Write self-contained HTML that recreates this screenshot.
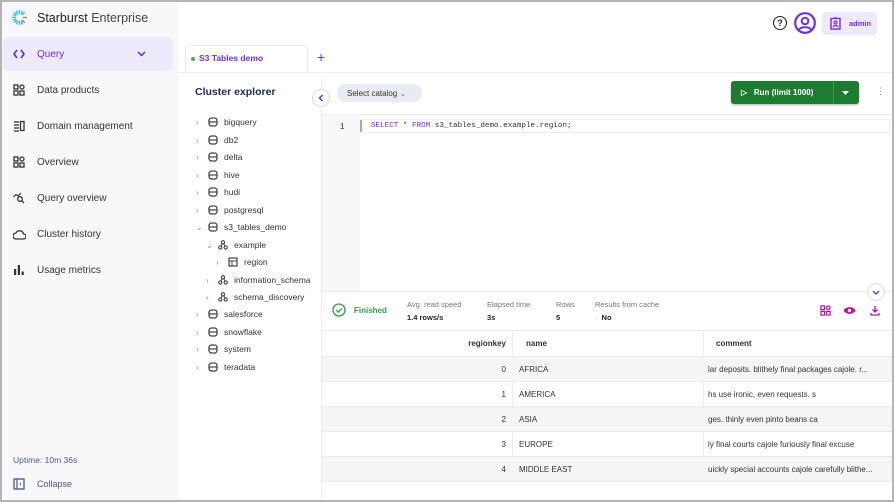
<!DOCTYPE html><html><head><style>
*{box-sizing:border-box;margin:0;padding:0}
body{width:894px;height:502px;overflow:hidden;font-family:"Liberation Sans",sans-serif;background:#fff;position:relative;color:#222}
.frame{position:absolute;inset:0;border:2px solid #b4b4b4;pointer-events:none;z-index:10}
.abs{position:absolute}
.side{left:0;top:0;width:178px;height:502px;background:#f8f8fa}
.nav{position:absolute;left:4px;width:168px;height:34px;display:flex;align-items:center;font-size:10px;color:#333}
.nav svg{margin:0 12px 0 9px}
.tree{font-size:8.5px;color:#333}
.tr{position:absolute;display:flex;align-items:center;height:12px}
.chev{color:#888;font-size:8px;width:12px}
.tr svg{margin-right:6px}
.row{position:absolute;left:322px;width:570px;height:25px;font-size:8px;color:#333;border-bottom:1px solid #ececec}
.row span{position:absolute;top:8px}
.g{background:#f4f5f7}
</style></head><body>
<svg width="0" height="0" style="position:absolute"><defs>
<symbol id="db" viewBox="0 0 10 10"><rect x="1" y="1" width="8" height="8" rx="2.5" fill="none" stroke="#444" stroke-width="1.3"/><line x1="1" y1="5" x2="9" y2="5" stroke="#444" stroke-width="1.2"/></symbol>
<symbol id="sch" viewBox="0 0 10 10"><circle cx="5" cy="2.3" r="1.6" fill="none" stroke="#444" stroke-width="1.1"/><circle cx="2.3" cy="7.5" r="1.6" fill="none" stroke="#444" stroke-width="1.1"/><circle cx="7.7" cy="7.5" r="1.6" fill="none" stroke="#444" stroke-width="1.1"/><path d="M4.3 3.8L3 6M5.7 3.8L7 6" stroke="#444" stroke-width="1"/></symbol>
<symbol id="grid" viewBox="0 0 12 12"><rect x="1" y="1" width="4" height="4" fill="none" stroke="#333" stroke-width="1.3"/><rect x="7" y="1" width="4" height="4" rx="2" fill="none" stroke="#333" stroke-width="1.3"/><rect x="1" y="7" width="4" height="4" fill="none" stroke="#333" stroke-width="1.3"/><rect x="7" y="7" width="4" height="4" fill="none" stroke="#333" stroke-width="1.3"/></symbol>
</defs></svg>
<div class="abs side"></div>
<svg class="abs" style="left:11px;top:9px" width="17" height="17" viewBox="0 0 17 17"><g stroke="#2ec4e6" stroke-width="1.4">
<line x1="8.5" y1="1" x2="8.5" y2="5"/><line x1="8.5" y1="12" x2="8.5" y2="16"/><line x1="1" y1="8.5" x2="5" y2="8.5"/><line x1="12" y1="8.5" x2="16" y2="8.5" stroke="#888"/>
<line x1="3.2" y1="3.2" x2="6" y2="6"/><line x1="13.8" y1="13.8" x2="11" y2="11" stroke="#888"/><line x1="3.2" y1="13.8" x2="6" y2="11"/><line x1="13.8" y1="3.2" x2="11" y2="6"/>
<line x1="5.5" y1="1.6" x2="6.8" y2="5"/><line x1="1.6" y1="5.5" x2="5" y2="6.8"/><line x1="1.6" y1="11.5" x2="5" y2="10.2"/><line x1="5.5" y1="15.4" x2="6.8" y2="12"/><line x1="11.5" y1="1.6" x2="10.2" y2="5"/><line x1="11.5" y1="15.4" x2="10.2" y2="12" stroke="#888"/></g></svg>
<div class="abs" style="left:37px;top:11px;font-size:12.5px;color:#222">Starburst <span style="color:#444">Enterprise</span></div>
<div class="abs" style="left:3px;top:37px;width:170px;height:34px;background:#efeafb;border-radius:6px"></div>
<div class="nav" style="top:37px;color:#6b2ff0"><svg width="12" height="12" viewBox="0 0 12 12"><path d="M4 2L1 6l3 4M8 2l3 4-3 4" fill="none" stroke="#5a2be0" stroke-width="1.6"/></svg>Query<svg style="position:absolute;right:14px" width="9" height="6" viewBox="0 0 9 6"><path d="M1 1l3.5 3.5L8 1" fill="none" stroke="#5a2be0" stroke-width="1.5"/></svg></div>
<div class="nav" style="top:73px"><svg width="12" height="12"><use href="#grid"/></svg>Data products</div>
<div class="nav" style="top:109px"><svg width="12" height="12" viewBox="0 0 12 12"><path d="M1 2h5M1 5h5M1 8h5M1 11h5" stroke="#333" stroke-width="1.2"/><rect x="7.5" y="1.5" width="3.5" height="9" fill="none" stroke="#333" stroke-width="1.3"/></svg>Domain management</div>
<div class="nav" style="top:145px"><svg width="12" height="12"><use href="#grid"/></svg>Overview</div>
<div class="nav" style="top:181px"><svg width="12" height="12" viewBox="0 0 12 12"><path d="M0.5 5L3 2.5 5 4 8 1" fill="none" stroke="#333" stroke-width="1.2"/><circle cx="7" cy="7" r="2.3" fill="none" stroke="#333" stroke-width="1.3"/><path d="M8.7 8.7L11 11" stroke="#333" stroke-width="1.3"/></svg>Query overview</div>
<div class="nav" style="top:217px"><svg width="13" height="11" viewBox="0 0 13 11" style="margin-right:11px"><path d="M3 10h7.5a2.5 2.5 0 000-5 4 4 0 00-7.5-1A3 3 0 003 10z" fill="none" stroke="#333" stroke-width="1.3"/></svg>Cluster history</div>
<div class="nav" style="top:253px"><svg width="12" height="12" viewBox="0 0 12 12"><rect x="1" y="5" width="2.2" height="6" fill="#333"/><rect x="4.8" y="1" width="2.2" height="10" fill="#333"/><rect x="8.6" y="7.5" width="2.2" height="3.5" fill="#333"/></svg>Usage metrics</div>
<div class="abs" style="left:13px;top:455px;font-size:8.5px;color:#4a5590">Uptime: 10m 36s</div>
<svg class="abs" style="left:13px;top:478px" width="12" height="12" viewBox="0 0 12 12"><rect x="1" y="1" width="10" height="10" fill="none" stroke="#4a5590" stroke-width="1.3"/><line x1="4" y1="1" x2="4" y2="11" stroke="#4a5590" stroke-width="1.2"/><path d="M8 4.5L6.5 6 8 7.5z" fill="#4a5590"/></svg>
<div class="abs" style="left:37px;top:479px;font-size:9px;color:#4a5590">Collapse</div>

<div class="abs" style="left:185px;top:45px;width:123px;height:28px;border:1px solid #e8e8ea;border-bottom:none;border-radius:5px 5px 0 0;background:#fff"></div>
<div class="abs" style="left:191px;top:57px;width:4px;height:4px;border-radius:50%;background:#4caf50"></div>
<div class="abs" style="left:199px;top:53px;font-size:8.5px;font-weight:bold;color:#6b2ff0">S3 Tables demo</div>
<div class="abs" style="left:317px;top:49px;font-size:14px;color:#6b2ff0">+</div>
<div class="abs" style="left:178px;top:72px;width:716px;border-top:1px solid #ececee"></div>
<div class="abs" style="left:321px;top:78px;height:424px;border-left:1px solid #ececee"></div>
<div class="abs" style="left:195px;top:86px;font-size:10.5px;font-weight:bold;color:#1e2a55">Cluster explorer</div>
<div class="abs" style="left:312px;top:89px;width:18px;height:18px;border:1px solid #ddd;border-radius:50%;background:#fff"></div>
<svg class="abs" style="left:318px;top:94px" width="6" height="8" viewBox="0 0 6 8"><path d="M4.5 1L1.5 4l3 3" fill="none" stroke="#6b2ff0" stroke-width="1.5"/></svg>
<div class="tree">
<div class="tr" style="left:196px;top:116px"><span class="chev">›</span><svg width="10" height="10"><use href="#db"/></svg>bigquery</div>
<div class="tr" style="left:196px;top:134px"><span class="chev">›</span><svg width="10" height="10"><use href="#db"/></svg>db2</div>
<div class="tr" style="left:196px;top:151px"><span class="chev">›</span><svg width="10" height="10"><use href="#db"/></svg>delta</div>
<div class="tr" style="left:196px;top:169px"><span class="chev">›</span><svg width="10" height="10"><use href="#db"/></svg>hive</div>
<div class="tr" style="left:196px;top:186px"><span class="chev">›</span><svg width="10" height="10"><use href="#db"/></svg>hudi</div>
<div class="tr" style="left:196px;top:204px"><span class="chev">›</span><svg width="10" height="10"><use href="#db"/></svg>postgresql</div>
<div class="tr" style="left:196px;top:221px"><span class="chev">⌄</span><svg width="10" height="10"><use href="#db"/></svg>s3_tables_demo</div>
<div class="tr" style="left:206px;top:239px"><span class="chev">⌄</span><svg width="10" height="10"><use href="#sch"/></svg>example</div>
<div class="tr" style="left:216px;top:256px"><span class="chev">›</span><svg width="10" height="10" viewBox="0 0 10 10"><rect x="1" y="1" width="8" height="8" fill="none" stroke="#444" stroke-width="1.2"/><path d="M1 4h8M4 4v5" stroke="#444" stroke-width="1"/></svg>region</div>
<div class="tr" style="left:206px;top:274px"><span class="chev">›</span><svg width="10" height="10"><use href="#sch"/></svg>information_schema</div>
<div class="tr" style="left:206px;top:291px"><span class="chev">›</span><svg width="10" height="10"><use href="#sch"/></svg>schema_discovery</div>
<div class="tr" style="left:196px;top:308px"><span class="chev">›</span><svg width="10" height="10"><use href="#db"/></svg>salesforce</div>
<div class="tr" style="left:196px;top:326px"><span class="chev">›</span><svg width="10" height="10"><use href="#db"/></svg>snowflake</div>
<div class="tr" style="left:196px;top:343px"><span class="chev">›</span><svg width="10" height="10"><use href="#db"/></svg>system</div>
<div class="tr" style="left:196px;top:361px"><span class="chev">›</span><svg width="10" height="10"><use href="#db"/></svg>teradata</div>
</div>

<div class="abs" style="left:773px;top:16px;width:14px;height:14px;border:1.4px solid #222;border-radius:50%;font-size:9px;text-align:center;line-height:12px;font-weight:bold">?</div>
<svg class="abs" style="left:794px;top:12px" width="22" height="22" viewBox="0 0 22 22"><circle cx="11" cy="11" r="9.8" fill="none" stroke="#6b2ff0" stroke-width="2.2"/><circle cx="11" cy="9" r="3.3" fill="none" stroke="#6b2ff0" stroke-width="2"/><path d="M5 17.5c2-3 10-3 12 0" fill="none" stroke="#6b2ff0" stroke-width="2"/></svg>
<div class="abs" style="left:822px;top:12px;width:55px;height:23px;background:#efeafb;border-radius:4px"></div>
<svg class="abs" style="left:830px;top:17px" width="11" height="13" viewBox="0 0 11 13"><rect x="1" y="1.5" width="9" height="10.5" fill="none" stroke="#6b2ff0" stroke-width="1.4"/><circle cx="5.5" cy="5.5" r="1.5" fill="none" stroke="#6b2ff0" stroke-width="1.2"/><path d="M3 10c1-2 4-2 5 0M4 1h3" stroke="#6b2ff0" stroke-width="1.2" fill="none"/></svg>
<div class="abs" style="left:849px;top:19px;font-size:7.5px;font-weight:bold;color:#6b2ff0">admin</div>

<div class="abs" style="left:337px;top:84px;width:85px;height:18px;background:#e9ebf2;border-radius:9px;font-size:8px;color:#333;padding:5px 0 0 10px">Select catalog <span style="color:#777">⌄</span></div>
<div class="abs" style="left:731px;top:81px;width:128px;height:23px;background:#1e7b32;border-radius:3px;box-shadow:0 1px 2px rgba(0,0,0,.3)"></div>
<div class="abs" style="left:833px;top:81px;height:23px;border-left:1px solid #4a9a5a"></div>
<div class="abs" style="left:741px;top:88px;font-size:8px;color:#fff;font-weight:bold">▷&nbsp;&nbsp; Run (limit 1000)</div>
<svg class="abs" style="left:842px;top:91px" width="7" height="4" viewBox="0 0 7 4"><path d="M0 0h7L3.5 4z" fill="#fff"/></svg>
<div class="abs" style="left:876px;top:86px;font-size:9px;color:#888">⋮</div>
<div class="abs" style="left:322px;top:114px;width:572px;border-top:1px solid #ececee"></div>
<div class="abs" style="left:322px;top:115px;width:38px;height:176px;background:#f7f7f9"></div>
<div class="abs" style="left:340px;top:122px;font-size:8px;color:#333">1</div>
<div class="abs" style="left:360px;top:120px;height:12px;border-left:2px solid #7ec882"></div>
<div class="abs" style="left:371px;top:122px;font-family:'Liberation Mono',monospace;font-size:7.6px;color:#333"><span style="color:#6b2ff0">SELECT</span> * <span style="color:#6b2ff0">FROM</span> s3_tables_demo.example.region;</div>
<div class="abs" style="left:360px;top:119px;width:530px;height:14px;border:1px solid #eee;border-left:none"></div>

<div class="abs" style="left:322px;top:291px;width:572px;border-top:1px solid #ececee"></div>
<div class="abs" style="left:867px;top:283px;width:18px;height:18px;border:1px solid #ddd;border-radius:50%;background:#fff"></div>
<svg class="abs" style="left:872px;top:290px" width="8" height="5" viewBox="0 0 8 5"><path d="M1 1l3 3 3-3" fill="none" stroke="#6b2ff0" stroke-width="1.4"/></svg>
<svg class="abs" style="left:332px;top:303px" width="14" height="14" viewBox="0 0 14 14"><circle cx="7" cy="7" r="6" fill="none" stroke="#2e9d4a" stroke-width="1.3"/><path d="M4.3 7.2l2 2 3.5-3.8" fill="none" stroke="#2e9d4a" stroke-width="1.3"/></svg>
<div class="abs" style="left:354px;top:306px;font-size:8px;font-weight:bold;color:#2e9d4a">Finished</div>
<div class="abs" style="left:407px;top:300px;font-size:7.5px;color:#777">Avg. read speed</div>
<div class="abs" style="left:407px;top:313px;font-size:7.5px;font-weight:bold">1.4 rows/s</div>
<div class="abs" style="left:487px;top:300px;font-size:7.5px;color:#777">Elapsed time</div>
<div class="abs" style="left:487px;top:313px;font-size:7.5px;font-weight:bold">3s</div>
<div class="abs" style="left:556px;top:300px;font-size:7.5px;color:#777">Rows</div>
<div class="abs" style="left:556px;top:313px;font-size:7.5px;font-weight:bold">5</div>
<div class="abs" style="left:595px;top:300px;font-size:7.5px;color:#777">Results from cache</div>
<div class="abs" style="left:595px;top:313px;font-size:7.5px;font-weight:bold"><span style="color:#bbb;font-weight:normal">◌</span> No</div>
<svg class="abs" style="left:820px;top:305px" width="11" height="11" viewBox="0 0 12 12"><g fill="none" stroke="#c0109a" stroke-width="1.3"><rect x="1" y="1" width="4" height="4"/><circle cx="9" cy="3" r="2"/><rect x="1" y="7" width="4" height="4"/><rect x="7" y="7" width="4" height="4"/></g></svg>
<svg class="abs" style="left:843px;top:306px" width="13" height="9" viewBox="0 0 13 9"><path d="M0.5 4.5C3 0 10 0 12.5 4.5 10 9 3 9 0.5 4.5z" fill="#c0109a"/><circle cx="6.5" cy="4.5" r="1.7" fill="#fff"/></svg>
<svg class="abs" style="left:870px;top:305px" width="10" height="11" viewBox="0 0 10 11"><path d="M5 1v6M2.5 4.5L5 7l2.5-2.5M1 8v2h8V8" fill="none" stroke="#c0109a" stroke-width="1.3"/></svg>
<div class="abs" style="left:322px;top:330px;width:572px;border-top:1px solid #ececee"></div>
<div class="row" style="top:331px;height:26px;font-weight:bold"><span style="right:386px">regionkey</span><span style="left:204px">name</span><span style="left:394px">comment</span></div>
<div class="abs" style="left:512px;top:331px;height:151px;border-left:1px solid #ececee"></div>
<div class="abs" style="left:703px;top:331px;height:151px;border-left:1px solid #ececee"></div>
<div class="row g" style="top:357px"><span style="right:386px">0</span><span style="left:197px">AFRICA</span><span style="left:386px">lar deposits. blithely final packages cajole. r...</span></div>
<div class="row" style="top:382px"><span style="right:386px">1</span><span style="left:197px">AMERICA</span><span style="left:386px">hs use ironic, even requests. s</span></div>
<div class="row g" style="top:407px"><span style="right:386px">2</span><span style="left:197px">ASIA</span><span style="left:386px">ges. thinly even pinto beans ca</span></div>
<div class="row" style="top:432px"><span style="right:386px">3</span><span style="left:197px">EUROPE</span><span style="left:386px">ly final courts cajole furiously final excuse</span></div>
<div class="row g" style="top:457px"><span style="right:386px">4</span><span style="left:197px">MIDDLE EAST</span><span style="left:386px">uickly special accounts cajole carefully blithe...</span></div>
<div class="frame"></div>
</body></html>
